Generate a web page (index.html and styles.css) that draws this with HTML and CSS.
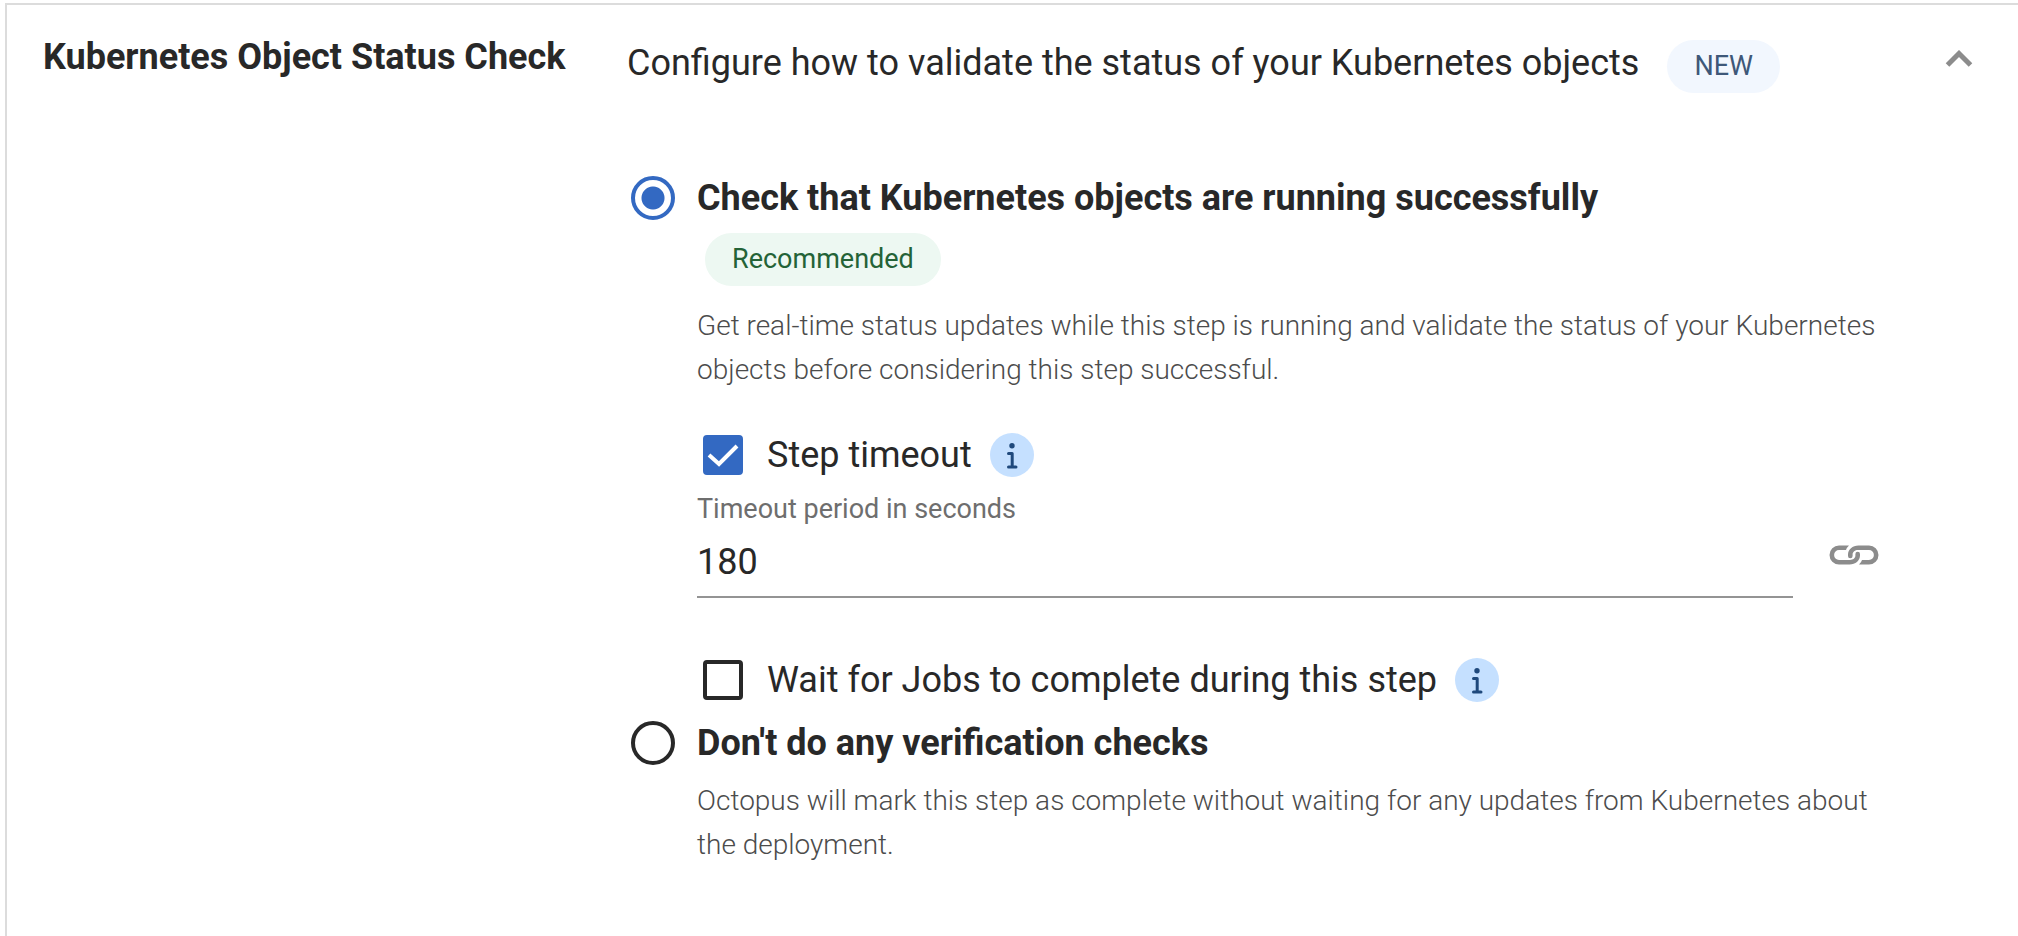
FILE: index.html
```html
<!DOCTYPE html>
<html lang="en">
<head>
<meta charset="utf-8">
<title>Kubernetes Object Status Check</title>
<link rel="stylesheet" href="styles.css">
</head>
<body>
<section class="section">
  <h2 class="section-title">Kubernetes Object Status Check</h2>
  <div class="section-main">
    <header class="summary">
      <p class="summary-text">Configure how to validate the status of your Kubernetes objects</p>
      <span class="chip chip-new">NEW</span>
    </header>
    <form class="options">
      <div class="option">
        <input class="radio" type="radio" name="check" id="check-on" checked>
        <div class="option-body">
          <label class="option-title" for="check-on">Check that Kubernetes objects are running successfully</label>
          <span class="chip chip-recommended">Recommended</span>
          <p class="note">Get real-time status updates while this step is running and validate the status of your Kubernetes objects before considering this step successful.</p>
          <div class="check-row check-row-first">
            <input class="checkbox" type="checkbox" id="timeout-on" checked>
            <label class="check-label" for="timeout-on">Step timeout</label>
            <button class="info" type="button" aria-label="About step timeout">
              <svg class="info-icon" viewBox="0 0 44 44"><circle cx="22" cy="12.700" r="2.700"/><path d="M18.500 20.500h3.700v13.500M18.500 34h7.500"/></svg>
            </button>
          </div>
          <label class="field-label" for="timeout">Timeout period in seconds</label>
          <div class="field-row">
            <input class="field" type="text" id="timeout" value="180">
            <button class="bind" type="button" aria-label="Bind to variable">
              <svg class="bind-icon" viewBox="0 0 50 20"><path class="bind-fill" d="M20 .500H10a9.500 9.500 0 0 0 0 19H20.500C26.500 19.500 31 15.500 31 10.500V9a2.300 2.300 0 0 0-4.600 0V10.500C26.400 13 24 14.900 21 14.900H10a4.900 4.900 0 0 1 0-9.800H17Q17.800 2.500 20 .500zM30 19.500H40a9.500 9.500 0 0 0 0-19H29.500C23.500 .500 19 4.500 19 9.500V11a2.300 2.300 0 0 0 4.600 0V9.500C23.600 7 26 5.100 29 5.100H40a4.900 4.900 0 0 1 0 9.800H33Q32.200 17.500 30 19.500z"/></svg>
            </button>
          </div>
          <div class="check-row">
            <input class="checkbox" type="checkbox" id="jobs">
            <label class="check-label" for="jobs">Wait for Jobs to complete during this step</label>
            <button class="info" type="button" aria-label="About waiting for jobs">
              <svg class="info-icon" viewBox="0 0 44 44"><circle cx="22" cy="12.700" r="2.700"/><path d="M18.500 20.500h3.700v13.500M18.500 34h7.500"/></svg>
            </button>
          </div>
        </div>
      </div>
      <div class="option">
        <input class="radio" type="radio" name="check" id="check-off">
        <div class="option-body">
          <label class="option-title" for="check-off">Don't do any verification checks</label>
          <p class="note">Octopus will mark this step as complete without waiting for any updates from Kubernetes about the deployment.</p>
        </div>
      </div>
    </form>
  </div>
  <button class="collapse" type="button" aria-label="Collapse section">
    <svg class="collapse-icon" viewBox="0 0 28 18"><path d="M2.500 15L14 3.500 25.500 15"/></svg>
  </button>
</section>
</body>
</html>
```
FILE: styles.css
```css
* {
  box-sizing: border-box;
}

body {
  margin: 0;
  padding: 3px 0 0 5px;
  background: #fff;
  color: #282828;
  font-family: Roboto, "Liberation Sans", sans-serif;
  font-size: 36px;
  line-height: 44px;
}

button {
  padding: 0;
  border: 0;
  background: none;
  cursor: pointer;
}

svg {
  display: block;
  fill: none;
}

.section {
  display: grid;
  grid-template-columns: 584px 1fr 28px;
  min-height: calc(100vh - 3px);
  padding: 30px 45px 0 36px;
  border-top: 2px solid #dcdcdc;
  border-left: 2px solid #dcdcdc;
}

.section-title {
  margin: 0;
  font-size: 36px;
  font-weight: 700;
}

.section-main {
  padding-right: 66px;
}

.summary {
  display: flex;
  align-items: flex-start;
  gap: 28px;
}

.summary-text {
  margin: 0;
  padding-top: 6px;
}

.chip {
  display: inline-block;
  padding: 0 27px;
  border-radius: 27px;
  font-size: 27px;
  line-height: 53px;
}

.chip-new {
  margin-top: 5px;
  background: #f2f7fe;
  color: #3e5879;
}

.chip-recommended {
  margin: 13px 0 4px 8px;
  background: #edf8f2;
  color: #246337;
  vertical-align: top;
}

.options {
  margin-top: 83px;
  padding-left: 4px;
}

.option {
  display: flex;
  gap: 22px;
}

.radio,
.checkbox {
  flex: none;
  appearance: none;
  margin: 0;
  border: 4px solid #282828;
  background: #fff;
}

.radio {
  width: 44px;
  height: 44px;
  border-radius: 50%;
}

.radio:checked {
  border-color: #3369c2;
  background: radial-gradient(circle, #3369c2 11px, #fff 12px);
}

.option-body {
  flex: 1;
}

.option-title {
  display: block;
  font-weight: 700;
}

.note {
  margin: 14px 0 0;
  color: #4c4c4c;
  font-size: 28px;
  font-weight: 300;
}

.check-row {
  display: flex;
  align-items: center;
  padding-left: 6px;
}

.check-row-first {
  margin-top: 41px;
}

.checkbox {
  width: 40px;
  height: 40px;
  margin-right: 24px;
  border-radius: 4px;
}

.checkbox:checked {
  border-color: #3369c2;
  background: #3369c2 url("data:image/svg+xml,%3Csvg xmlns='http://www.w3.org/2000/svg' viewBox='0 0 32 32'%3E%3Cpath d='M2 16l10 9L30 7' fill='none' stroke='white' stroke-width='4'/%3E%3C/svg%3E") center / 32px 32px no-repeat;
}

.info {
  width: 44px;
  height: 44px;
  margin-left: 18px;
  border-radius: 50%;
  background: #c5e0ff;
}

.info-icon {
  width: 44px;
  height: 44px;
}

.info-icon circle {
  fill: #1f497c;
}

.info-icon path {
  stroke: #1f497c;
  stroke-width: 3;
  stroke-linecap: round;
  stroke-linejoin: round;
}

.field-label {
  display: block;
  margin-top: 10px;
  color: #6e6e6e;
  font-size: 27px;
}

.field-row {
  display: flex;
  align-items: flex-start;
  gap: 36px;
}

.field {
  flex: 1;
  min-width: 0;
  height: 67px;
  padding: 0 0 4px;
  border: 0;
  border-bottom: 2px solid #949494;
  background: none;
  color: inherit;
  font: inherit;
  outline: 0;
}

.bind {
  margin-top: 14px;
}

.bind-icon {
  width: 50px;
  height: 20px;
}

.bind-fill {
  fill: #8c8c8c;
}

.field-row + .check-row {
  margin: 60px 0 19px;
}

.collapse {
  align-self: start;
  margin-top: 15px;
}

.collapse-icon {
  width: 28px;
  height: 18px;
  stroke: #8c8c8c;
  stroke-width: 5;
}
```
